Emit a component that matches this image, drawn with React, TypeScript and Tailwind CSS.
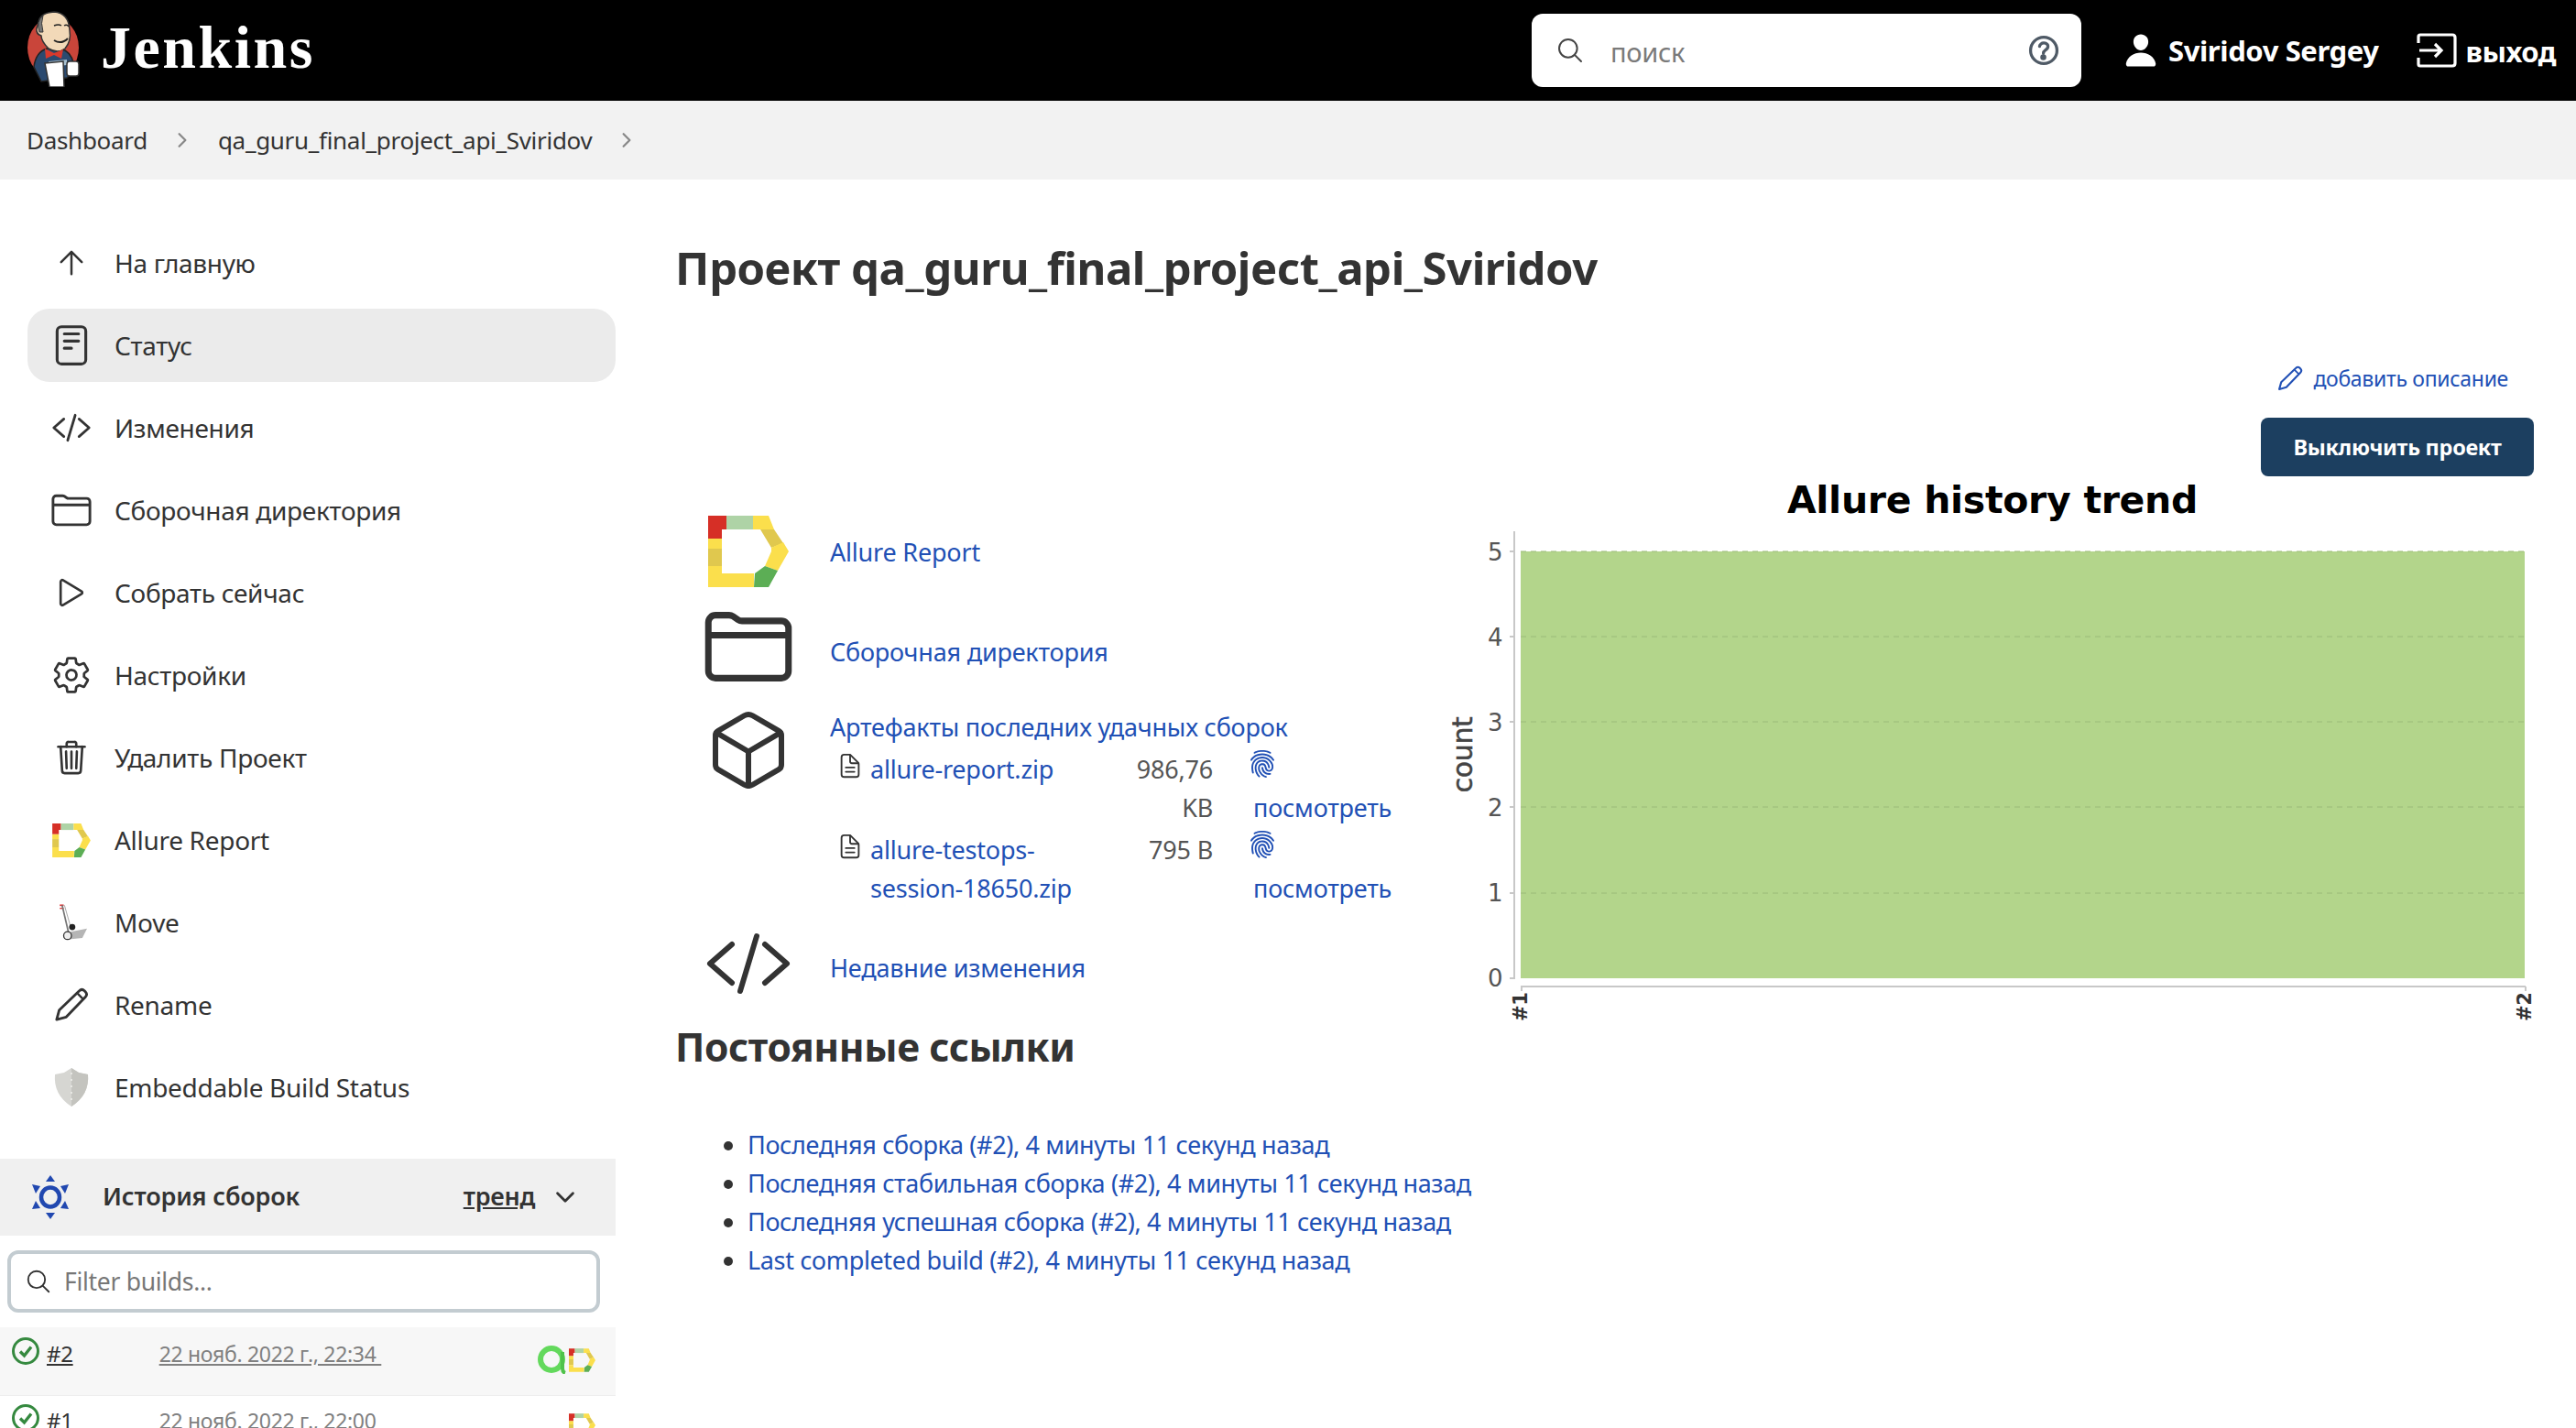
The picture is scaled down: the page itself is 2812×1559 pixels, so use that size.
import React from "react";
import {
  IoArrowUpOutline,
  IoReaderOutline,
  IoCodeSlashOutline,
  IoFolderOutline,
  IoPlayOutline,
  IoSettingsOutline,
  IoTrashOutline,
  IoCubeOutline,
  IoSearchOutline,
  IoHelpCircleOutline,
  IoPerson,
  IoDocumentTextOutline,
  IoChevronDownOutline,
  IoChevronForwardOutline,
  IoFingerPrint,
} from "react-icons/io5";

const JenkinsLogo = () => (
  <svg viewBox="0 0 60 84" className="w-[60px] h-[84px] shrink-0">
    <ellipse cx="29" cy="41" rx="28" ry="33" fill="#c9453a" />
    <path d="M8 62 Q10 46 22 42 L42 44 Q52 50 52 66 L44 74 L16 78 Z" fill="#2b4a6f" stroke="#222" strokeWidth="1.5" />
    <path d="M13 14 Q14 3 30 2 Q46 3 47 22 Q49 34 42 42 Q34 48 24 42 Q16 34 16 28 Q10 26 11 20 Z" fill="#f2d9b8" stroke="#333" strokeWidth="1.5" />
    <path d="M14 24 Q10 12 18 6 Q15 14 18 24 Z" fill="#777" stroke="#333" />
    <path d="M30 17 Q35 15 38 17 M41 17 Q44 15 46 18" stroke="#222" strokeWidth="1.5" fill="none" />
    <path d="M30 33 Q38 38 45 31" stroke="#222" strokeWidth="2" fill="none" />
    <path d="M20 42 L30 47 L40 43 L38 53 L30 49 L21 53 Z" fill="#d8392c" />
    <path d="M24 56 L44 54 L44 60 L26 62 Z" fill="#a8c0cf" />
    <path d="M20 58 L40 56 L41 84 L25 84 Z" fill="#fff" stroke="#333" strokeWidth="1.5" />
    <rect x="44" y="56" width="13" height="16" rx="3" fill="#fff" stroke="#333" strokeWidth="1.5" />
  </svg>
);

const AllureLogo = ({ className }: { className: string }) => (
  <svg viewBox="0 0 88 78" className={className}>
    <polygon points="0,0 20,0 20,15 15,15 15,25 0,25" fill="#d62f26" />
    <polygon points="20,0 49,0 49,15 20,15" fill="#aed3a6" />
    <polygon points="49,0 66,0 72,15 49,15" fill="#fbdf4c" />
    <polygon points="57,15 72,15 82,30 69,35" fill="#e0c84e" />
    <polygon points="69,35 82,29 88,39 76,60 62,55 69,39" fill="#fbdf4c" />
    <polygon points="51,63 62,55 76,60 66,78 50,78" fill="#5cae55" />
    <polygon points="0,25 15,25 15,36 0,36" fill="#fbdf4c" />
    <polygon points="0,36 15,36 15,55 0,55" fill="#e0c84e" />
    <polygon points="0,55 15,55 15,63 50,63 50,78 0,78" fill="#fbdf4c" />
  </svg>
);

const PencilIcon = ({ className }: { className: string }) => (
  <svg viewBox="0 0 40 40" fill="none" stroke="currentColor" strokeWidth="3" strokeLinejoin="round" className={className}>
    <path d="M3 37 L6 26 L29 4 Q32 1 35 4 L36 5 Q39 8 36 11 L14 34 Z" />
    <path d="M27 7 L33 13" strokeWidth="2.5" />
  </svg>
);

const LogoutIcon = () => (
  <svg viewBox="0 0 44 38" fill="none" stroke="currentColor" strokeWidth="3.2" className="w-[44px] h-[38px] shrink-0">
    <path d="M2 11 V4 Q2 2 4 2 H39 Q42 2 42 5 V33 Q42 36 39 36 H4 Q2 36 2 34 V27" />
    <path d="M3 19 H27 M20 12 L27 19 L20 26" />
  </svg>
);

const CheckIcon = ({ className }: { className: string }) => (
  <svg viewBox="0 0 32 32" fill="none" stroke="#35893f" className={className}>
    <circle cx="16" cy="16" r="13.5" strokeWidth="3" />
    <path d="M10 16.5 L14.5 21 L22 11.5" strokeWidth="3.4" />
  </svg>
);

const TrolleyIcon = () => (
  <svg viewBox="0 0 40 48" className="w-[34px] h-[44px]">
    <path d="M5 2 L10 2" stroke="#d33" strokeWidth="2" />
    <path d="M5 6 L10 6" stroke="#d33" strokeWidth="1.5" />
    <path d="M8 2 L16 36" stroke="#777" strokeWidth="2" fill="none" />
    <path d="M11 2 L19 30" stroke="#999" strokeWidth="1" fill="none" />
    <path d="M19 36 L40 32 L34 44 L14 46 Z" fill="#b5b5b5" />
    <circle cx="21" cy="30" r="4" fill="#222" />
    <circle cx="15" cy="41" r="5" fill="#eee" stroke="#333" strokeWidth="1.5" />
  </svg>
);

const ShieldIcon = () => (
  <svg viewBox="0 0 40 44" className="w-[40px] h-[44px]">
    <path d="M20 1 L28 6 L38 8 Q40 30 20 43 Q0 30 2 8 L12 6 Z" fill="#d6d6d2" />
    <path d="M20 1 L28 6 L38 8 Q40 30 20 43 Z" fill="#c4c4bf" />
    <path d="M20 6 V38" stroke="#efefed" strokeWidth="1.5" strokeDasharray="2 5" />
  </svg>
);

const BuildHistoryIcon = () => (
  <svg viewBox="0 0 44 50" className="w-[44px] h-[50px]">
    <ellipse cx="22" cy="25" rx="10" ry="10.5" fill="none" stroke="#2148b0" strokeWidth="4.5" />
    <polygon points="22,1 27,8 17,8" fill="#2148b0" />
    <polygon points="22,49 27,42 17,42" fill="#2148b0" />
    <polygon points="2,11 11,13 6,21" fill="#2148b0" />
    <polygon points="42,11 33,13 38,21" fill="#2148b0" />
    <polygon points="2,38 11,37 6,29" fill="#2148b0" />
    <polygon points="42,38 33,37 38,29" fill="#2148b0" />
  </svg>
);

const TestOpsIcon = () => (
  <svg viewBox="0 0 32 32" className="w-[32px] h-[32px]">
    <circle cx="15" cy="16" r="12" fill="none" stroke="#63d95c" strokeWidth="6" />
    <path d="M27 8 V26 Q27 30 30 31" fill="none" stroke="#4fc24a" strokeWidth="4" />
  </svg>
);

const HistoryChart = () => (
  <svg viewBox="1570 520 1220 600" className="w-[1220px] h-[600px] shrink-0">
    <text x="2175" y="560" textAnchor="middle" fontFamily="DejaVu Sans" fontWeight="700" fontSize="41" fill="#000">
      Allure history trend
    </text>
    <rect x="1660" y="602" width="1096" height="466" fill="#b3d58b" />
    {[602, 695, 788, 881, 975].map((y) => (
      <line key={y} x1="1660" x2="2756" y1={y} y2={y} stroke="#9aba78" strokeDasharray="6 5" />
    ))}
    <path d="M1653 580 V1069" stroke="#c8c8c8" strokeWidth="2" />
    <path d="M1660 1077 H2757" stroke="#c8c8c8" strokeWidth="2" />
    {[602, 695, 788, 881, 975, 1068].map((y) => (
      <line key={y} x1="1648" x2="1653" y1={y} y2={y} stroke="#c8c8c8" strokeWidth="2" />
    ))}
    <path d="M1661 1077 V1082 M2757 1077 V1082" stroke="#c8c8c8" strokeWidth="2" />
    {["5", "4", "3", "2", "1", "0"].map((n, i) => (
      <text key={n} x="1632" y={[612, 705, 798, 891, 984, 1077][i]} textAnchor="middle" fontFamily="DejaVu Sans" fontSize="26" fill="#555">
        {n}
      </text>
    ))}
    <text transform="translate(1607 824) rotate(-90)" textAnchor="middle" fontFamily="DejaVu Sans" fontWeight="500" fontSize="30" stroke="#444" strokeWidth="0.5" fill="#444">
      count
    </text>
    <text transform="translate(1667 1115) rotate(-90)" fontFamily="DejaVu Sans" fontWeight="700" fontSize="21" fill="#333">
      #1
    </text>
    <text transform="translate(2763 1115) rotate(-90)" fontFamily="DejaVu Sans" fontWeight="700" fontSize="21" fill="#333">
      #2
    </text>
  </svg>
);

const sideItems = [
  { label: "На главную", icon: <IoArrowUpOutline className="w-[40px] h-[40px] [&_*]:stroke-[32]!" /> },
  { label: "Статус", icon: <IoReaderOutline className="w-[50px] h-[50px]" />, active: true },
  { label: "Изменения", icon: <IoCodeSlashOutline className="w-[44px] h-[44px]" /> },
  { label: "Сборочная директория", icon: <IoFolderOutline className="w-[46px] h-[46px]" /> },
  { label: "Собрать сейчас", icon: <IoPlayOutline className="w-[42px] h-[42px]" /> },
  { label: "Настройки", icon: <IoSettingsOutline className="w-[44px] h-[44px]" /> },
  { label: "Удалить Проект", icon: <IoTrashOutline className="w-[42px] h-[42px]" /> },
  { label: "Allure Report", icon: <AllureLogo className="w-[42px] h-[37px]" /> },
  { label: "Move", icon: <TrolleyIcon /> },
  { label: "Rename", icon: <PencilIcon className="w-[38px] h-[38px]" /> },
  { label: "Embeddable Build Status", icon: <ShieldIcon /> },
];

const permalinks = [
  "Последняя сборка (#2), 4 минуты 11 секунд назад",
  "Последняя стабильная сборка (#2), 4 минуты 11 секунд назад",
  "Последняя успешная сборка (#2), 4 минуты 11 секунд назад",
  "Last completed build (#2), 4 минуты 11 секунд назад",
];

const artifacts = [
  { name: "allure-report.zip", size: "986,76 KB" },
  { name: "allure-testops-session-18650.zip", size: "795 B" },
];

export default function App() {
  return (
    <div className="h-[1559px] overflow-hidden bg-white text-[#333] font-['Noto_Sans','Open_Sans',sans-serif] text-[27px] tracking-[-0.3px]">
      {/* Header */}
      <header className="h-[110px] bg-black flex items-center text-white">
        <div className="ml-[29px] mt-[-4px]">
          <JenkinsLogo />
        </div>
        <div className="ml-[21px] mt-[-6px] font-['Liberation_Serif',serif] font-bold text-[66px] tracking-[2.5px] leading-none">Jenkins</div>
        <div className="ml-auto w-[600px] h-[80px] bg-white rounded-[12px] flex items-center text-[#7a7a7a]">
          <IoSearchOutline className="ml-[26px] w-[32px] h-[32px] text-[#444]" />
          <span className="ml-[28px] mt-[4px] text-[29px]">поиск</span>
          <IoHelpCircleOutline className="ml-auto mr-[20px] w-[42px] h-[42px] text-[#4f5a66] [&_*]:stroke-[40]!" />
        </div>
        <IoPerson className="ml-[45px] w-[40px] h-[40px]" />
        <span className="ml-[10px] font-bold text-[31px] tracking-[-0.4px]">Sviridov Sergey</span>
        <span className="ml-[41px]">
          <LogoutIcon />
        </span>
        <span className="ml-[10px] mr-[22px] mt-[2px] font-bold text-[31px] tracking-[-0.5px]">выход</span>
      </header>

      {/* Breadcrumb */}
      <nav className="h-[86px] bg-[#f2f2f2] flex items-center pl-[29px] text-[26px]">
        <span>Dashboard</span>
        <IoChevronForwardOutline className="ml-[26px] w-[24px] h-[24px] text-[#888]" />
        <span className="ml-[27px]">qa_guru_final_project_api_Sviridov</span>
        <IoChevronForwardOutline className="ml-[26px] w-[24px] h-[24px] text-[#888]" />
      </nav>

      <div className="flex">
        {/* Sidebar */}
        <aside className="w-[672px] shrink-0 pt-[51px]">
          <div className="flex flex-col gap-[10px] pl-[30px] text-[28px]">
            {sideItems.map((item) => (
              <div
                key={item.label}
                className={`h-[80px] flex items-center rounded-[24px] ${item.active ? "bg-[#ebebeb]" : ""}`}
              >
                <span className="w-[95px] shrink-0 flex justify-center">{item.icon}</span>
                <span>{item.label}</span>
              </div>
            ))}
          </div>

          <div className="mt-[38px] h-[84px] bg-[#f0f0f0] flex items-center pl-[33px] text-[27px]">
            <BuildHistoryIcon />
            <span className="ml-[35px] mt-[-2px] font-semibold tracking-[-0.2px]">История сборок</span>
            <span className="ml-auto mt-[-2px] font-semibold underline">тренд</span>
            <IoChevronDownOutline className="ml-[18px] mr-[40px] w-[30px] h-[30px]" />
          </div>

          <div className="mt-[16px] ml-[8px] w-[647px] h-[68px] border-[4px] border-[#c3ccd1] rounded-[12px] flex items-center text-[#777] text-[26.5px]">
            <IoSearchOutline className="ml-[15px] w-[30px] h-[30px] text-[#333]" />
            <span className="ml-[13px] mt-[2px]">Filter builds...</span>
          </div>

          <div className="mt-[16px] h-[74px] bg-[#f7f7f7] flex items-start pl-[12px] text-[24px]">
            <CheckIcon className="mt-[10px] w-[32px] h-[32px] shrink-0" />
            <span className="ml-[7px] mt-[11px] underline">#2</span>
            <span className="ml-[94px] mt-[12px] underline text-[#808080] text-[23px]">22 нояб. 2022 г., 22:34&nbsp;</span>
            <span className="ml-auto mt-[19px]">
              <TestOpsIcon />
            </span>
            <span className="ml-[2px] mr-[22px] mt-[23px]">
              <AllureLogo className="w-[29px] h-[26px]" />
            </span>
          </div>
          <div className="h-[74px] flex items-start pl-[12px] text-[24px] border-t border-[#eee]">
            <CheckIcon className="mt-[8px] w-[32px] h-[32px] shrink-0" />
            <span className="ml-[7px] mt-[9px]">#1</span>
            <span className="ml-[94px] mt-[10px] text-[#808080] text-[23px]">22 нояб. 2022 г., 22:00</span>
            <span className="ml-auto mr-[22px] mt-[19px]">
              <AllureLogo className="w-[29px] h-[26px]" />
            </span>
          </div>
        </aside>

        {/* Main */}
        <main className="flex-1 ml-[65px] mr-[22px] pt-[66px] min-w-0">
          <h1 className="text-[49px] leading-[60px] font-bold tracking-[-0.44px]">Проект qa_guru_final_project_api_Sviridov</h1>

          <div className="mt-[71px] mr-[24px] flex flex-col items-end">
            <div className="h-[40px] flex items-center text-[#2150b5] text-[23px] mr-[28px]">
              <PencilIcon className="w-[28px] h-[28px] mr-[11px]" />
              добавить описание
            </div>
            <button className="mt-[23px] pt-[2px] w-[298px] h-[64px] bg-[#1c3f60] rounded-[8px] text-white text-[23.5px] font-bold">
              Выключить проект
            </button>
          </div>

          <div className="flex">
            <div className="w-[833px] shrink-0 pt-[43px] text-[#2150b5] tracking-[-0.2px]">
              <div className="h-[78px] ml-[36px] flex items-center">
                <AllureLogo className="w-[88px] h-[78px] shrink-0" />
                <span className="ml-[45px] mt-[2px]">Allure Report</span>
              </div>
              <div className="mt-[29px] h-[72px] ml-[36px] flex items-center">
                <IoFolderOutline className="w-[100px] h-[100px] -mx-[6px] text-[#333] shrink-0 [&_*]:stroke-[36]!" />
                <span className="ml-[45px] mt-[12px]">Сборочная директория</span>
              </div>
              <div className="mt-[32px] ml-[36px] flex">
                <span className="w-[88px] shrink-0 flex justify-center">
                  <IoCubeOutline className="w-[96px] h-[96px] -mt-[3px] text-[#333] shrink-0" />
                </span>
                <div className="ml-[45px] flex-1">
                  <div className="h-[40px] leading-[40px]">Артефакты последних удачных сборок</div>
                  <div className="mt-[5px]">
                    {artifacts.map((a) => (
                      <div key={a.name} className="flex h-[88px] leading-[42px]">
                        <IoDocumentTextOutline className="ml-[7px] mr-[7px] mt-[1px] w-[30px] h-[32px] text-[#333] shrink-0" />
                        <span className="w-[270px] shrink-0 break-words">{a.name}</span>
                        <span className="w-[104px] text-right text-[#555] shrink-0">{a.size}</span>
                        <div className="ml-[38px]">
                          <IoFingerPrint className="w-[32px] h-[32px] -mt-[1px] mb-[11px]" />
                          <span className="block ml-[6px]">посмотреть</span>
                        </div>
                      </div>
                    ))}
                  </div>
                </div>
              </div>
              <div className="mt-[24px] ml-[36px] flex items-center h-[65px]">
                <IoCodeSlashOutline className="w-[96px] h-[96px] -mx-[4px] text-[#333] shrink-0" />
                <span className="ml-[45px] mt-[11px]">Недавние изменения</span>
              </div>
              <h2 className="mt-[29px] text-[42.5px] leading-[60px] font-bold text-[#333] tracking-[-0.4px]">Постоянные ссылки</h2>
              <ul className="mt-[56px] list-disc pl-[79px] marker:text-[#333] tracking-[-0.36px]">
                {permalinks.map((p) => (
                  <li key={p} className="h-[42px] leading-[42px] whitespace-nowrap">{p}</li>
                ))}
              </ul>
            </div>
            <HistoryChart />
          </div>
        </main>
      </div>
    </div>
  );
}
